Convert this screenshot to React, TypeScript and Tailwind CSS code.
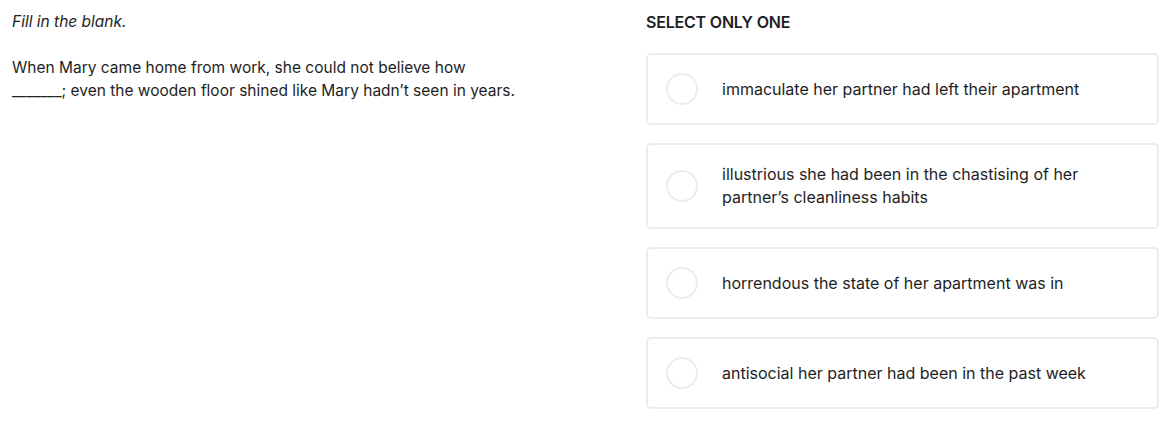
const options = [
  'immaculate her partner had left their apartment',
  'illustrious she had been in the chastising of her partner\u2019s cleanliness habits',
  'horrendous the state of her apartment was in',
  'antisocial her partner had been in the past week',
];

export default function App() {
  return (
    <div className="w-[1160px] h-[426px] bg-white text-[#1e1e24] flex font-['Inter',sans-serif]">
      {/* Question */}
      <div className="w-[646px] pl-3 pt-[11px]">
        <p className="italic text-[15.5px] leading-[22px]">Fill in the blank.</p>
        <p className="mt-[23px] text-[15.5px] leading-[23px] w-[540px]">
          When Mary came home from work, she could not believe how
          <br />
          _______; even the wooden floor shined like Mary hadn’t seen in years.
        </p>
      </div>

      {/* Answers */}
      <div className="w-[513px] pt-[11px]">
        <p className="text-[16px] leading-[22px] font-semibold tracking-[-0.2px]">SELECT ONLY ONE</p>
        <div className="mt-[20px] flex flex-col gap-[18px]">
          {options.map((o) => (
            <button
              key={o}
              className="w-full min-h-[71px] flex items-center text-left border-2 border-[#ececec] rounded-[5px] pl-[18px] pr-6 py-[18px] bg-white"
            >
              <span className="w-8 h-8 shrink-0 rounded-full border-2 border-[#ececec]" />
              <span className="ml-6 text-[16px] leading-[23px] w-[375px]">{o}</span>
            </button>
          ))}
        </div>
      </div>
    </div>
  );
}
